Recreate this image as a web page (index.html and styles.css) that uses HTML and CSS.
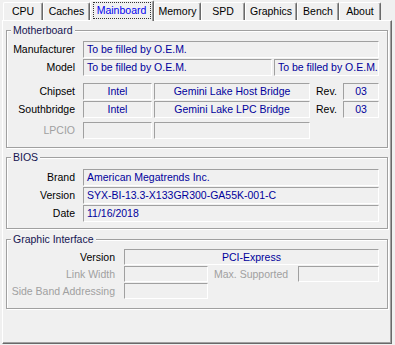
FILE: index.html
```html
<!DOCTYPE html>
<html lang="en">
<head>
<meta charset="UTF-8">
<title>CPU-Z Mainboard</title>
<link rel="stylesheet" href="styles.css">
</head>
<body>
<div class="tabs">
  <div class="tab t-cpu">CPU</div>
  <div class="tab t-caches">Caches</div>
  <div class="tab t-mainboard active"><span class="focus">Mainboard</span></div>
  <div class="tab t-memory">Memory</div>
  <div class="tab t-spd">SPD</div>
  <div class="tab t-graphics">Graphics</div>
  <div class="tab t-bench">Bench</div>
  <div class="tab t-about">About</div>
</div>

<div class="panel">
  <fieldset class="group motherboard">
    <legend>Motherboard</legend>
    <div class="row">
      <span class="lbl">Manufacturer</span>
      <span class="val f-wide">To be filled by O.E.M.</span>
    </div>
    <div class="row">
      <span class="lbl">Model</span>
      <span class="val f-model">To be filled by O.E.M.</span>
      <span class="val f-model2">To be filled by O.E.M.</span>
    </div>
    <div class="row sep">
      <span class="lbl">Chipset</span>
      <span class="val center f-vendor">Intel</span>
      <span class="val center f-bridge">Gemini Lake Host Bridge</span>
      <span class="rev">Rev.</span>
      <span class="val center f-rev">03</span>
    </div>
    <div class="row">
      <span class="lbl">Southbridge</span>
      <span class="val center f-vendor">Intel</span>
      <span class="val center f-bridge">Gemini Lake LPC Bridge</span>
      <span class="rev">Rev.</span>
      <span class="val center f-rev">03</span>
    </div>
    <div class="row lpcio">
      <span class="lbl off">LPCIO</span>
      <span class="val f-vendor"></span>
      <span class="val f-bridge"></span>
    </div>
  </fieldset>

  <fieldset class="group bios">
    <legend>BIOS</legend>
    <div class="row">
      <span class="lbl">Brand</span>
      <span class="val f-wide">American Megatrends Inc.</span>
    </div>
    <div class="row">
      <span class="lbl">Version</span>
      <span class="val f-wide">SYX-BI-13.3-X133GR300-GA55K-001-C</span>
    </div>
    <div class="row">
      <span class="lbl">Date</span>
      <span class="val f-wide">11/16/2018</span>
    </div>
  </fieldset>

  <fieldset class="group graphic">
    <legend>Graphic Interface</legend>
    <div class="row">
      <span class="lbl">Version</span>
      <span class="val center f-pci">PCI-Express</span>
    </div>
    <div class="row">
      <span class="lbl off">Link Width</span>
      <span class="val f-link"></span>
      <span class="max off">Max. Supported</span>
      <span class="val f-max"></span>
    </div>
    <div class="row">
      <span class="lbl off">Side Band Addressing</span>
      <span class="val f-link"></span>
    </div>
  </fieldset>
</div>
</body>
</html>
```

FILE: styles.css
```css
/* CPU-Z style window, classic look */

body {
    margin: 0;
    background-color: #f0f0f0;
    font-family: 'Liberation Sans', Arial, sans-serif;
    font-size: 10.5px;
    color: #000;
    width: 395px;
    height: 345px;
    overflow: hidden;
}

/* tab strip */
.tabs {
    display: flex;
    align-items: flex-end;
    height: 20px;
    padding-left: 3px;
}

.tab {
    box-sizing: border-box;
    height: 18px;
    line-height: 16px;
    text-align: center;
    border-top: 1px solid #fff;
    border-left: 1px solid #fff;
    border-right: 1px solid #696969;
    box-shadow: inset -1px 0 #a0a0a0;
    border-radius: 2px 2px 0 0;
}

.tab.active {
    position: relative;
    z-index: 1;
    height: 21px;
    margin-bottom: -1px;
    background-color: #f0f0f0;
    color: #0000f0;
    line-height: 18px;
}

.focus {
    display: inline-block;
    line-height: 14px;
    padding: 0 4px 1px 3px;
    outline: 1px dotted #333;
}

.t-cpu { width: 40px; }
.t-caches { width: 47px; }
.t-mainboard { width: 64px; }
.t-memory { width: 47px; }
.t-spd { width: 44px; }
.t-graphics { width: 52px; }
.t-bench { width: 42px; }
.t-about { width: 42px; }

/* tab page */
.panel {
    box-sizing: border-box;
    width: 390px;
    height: 324px;
    margin-left: 2px;
    padding: 0 3px;
    border: 1px solid;
    border-color: #fff #696969 #696969 #fff;
    box-shadow: inset -1px -1px #a0a0a0;
}

.group {
    margin: 0;
    min-width: 0;
    padding: 0 8px 8px 0;
    border: 1px solid #a0a0a0;
    box-shadow: inset 1px 1px #fff, 1px 1px #fff;
}

.group legend {
    margin-left: 4px;
    padding: 0 2px;
    line-height: 13px;
    background-color: #f0f0f0;
    color: #141450;
}

.motherboard {
    margin-top: 3px;
    padding-top: 4px;
}

.bios {
    margin-top: 3px;
    padding-top: 5px;
    padding-bottom: 6px;
}

.graphic {
    margin-top: 4px;
    padding-top: 3px;
    padding-bottom: 9px;
}

/* rows */
.row {
    display: flex;
    gap: 2px;
    margin-top: 1px;
}

.row:first-of-type {
    margin-top: 0;
}

.row.sep {
    margin-top: 7px;
}

.row.lpcio {
    margin-top: 4px;
}

.lbl {
    box-sizing: border-box;
    width: 74px;
    padding-right: 6px;
    text-align: right;
    line-height: 17px;
    white-space: nowrap;
}

.off {
    color: #a0a0a0;
}

.val {
    box-sizing: border-box;
    height: 17px;
    line-height: 15px;
    padding-left: 3px;
    border: 1px solid;
    border-color: #a0a0a0 #fff #fff #a0a0a0;
    color: #00009c;
    white-space: nowrap;
    overflow: hidden;
}

.val.center {
    text-align: center;
    padding-left: 0;
}

.rev {
    box-sizing: border-box;
    width: 29px;
    padding-left: 4px;
    line-height: 17px;
}

.f-wide { width: 296px; }
.f-model { width: 189px; }
.f-model2 { width: 105px; }
.f-vendor { width: 69px; }
.f-bridge { width: 156px; }
.f-rev { width: 36px; }

/* graphic interface rows */
.graphic .row {
    gap: 0;
}

.graphic .lbl {
    width: 117px;
    padding-right: 9px;
    line-height: 16px;
}

.graphic .val {
    height: 16px;
    line-height: 14px;
}

.f-pci { width: 255px; }
.f-link { width: 84px; }
.f-max { width: 81px; }

.max {
    box-sizing: border-box;
    width: 90px;
    padding-left: 6px;
    line-height: 16px;
}
```
